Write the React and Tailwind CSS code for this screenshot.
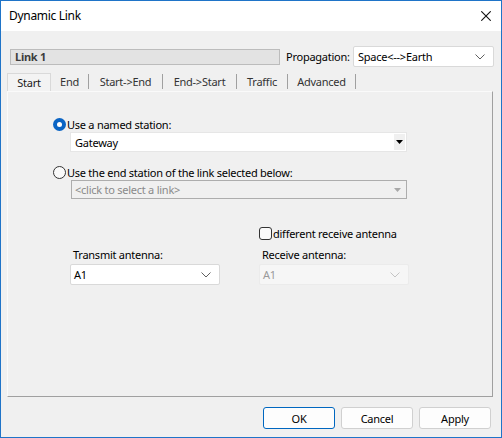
import React from 'react';

const Chevron = ({ color = '#606060' }) => (
    <svg width="10" height="6" viewBox="0 0 10 6" fill="none">
        <path d="M0.5 0.5 L5 5 L9.5 0.5" stroke={color} strokeWidth="1" />
    </svg>
);

const Triangle = ({ color = '#000' }) => (
    <svg width="7" height="4" viewBox="0 0 7 4">
        <path d="M0 0 H7 L3.5 4 Z" fill={color} />
    </svg>
);

// tab widths taken from the separators in the dialog
const tabs = [
    { label: 'End', w: 'w-[38px]' },
    { label: 'Start->End', w: 'w-[74px]' },
    { label: 'End->Start', w: 'w-[74px]' },
    { label: 'Traffic', w: 'w-[51px]' },
    { label: 'Advanced', w: 'w-[68px]' },
];

const App = () => {
    return (
        <div
            className="w-[502px] h-[438px] border border-[#1f74c8] bg-[#f0f0f0] flex flex-col text-[11px] tracking-[-0.25px] text-black leading-none"
            style={{ fontFamily: '"Noto Sans", "Open Sans", sans-serif' }}
        >
            {/* Title bar */}
            <div className="h-[30px] bg-white flex items-center justify-between pl-[8px] pr-[10px] shrink-0">
                <span className="text-[12px] tracking-[-0.3px] text-black">Dynamic Link</span>
                <svg width="10" height="10" viewBox="0 0 10 10">
                    <path d="M0.3 0.3 L9.7 9.7 M9.7 0.3 L0.3 9.7" stroke="#111" strokeWidth="1.1" />
                </svg>
            </div>

            {/* Header row */}
            <div className="flex items-center mt-[15px] pl-[9px] h-[21px] shrink-0">
                <div className="w-[270px] h-[16px] bg-[#e3e3e3] border border-[#bcbcbc] flex items-center pl-[4px] font-bold text-[#3c3c3c]">
                    Link 1
                </div>
                <span className="ml-[6px] w-[67px]">Propagation:</span>
                <div className="w-[141px] h-[21px] bg-white border border-[#d9d9d9] rounded-[2px] flex items-center justify-between pl-[4px] pr-[8px]">
                    <span>Space&lt;--&gt;Earth</span>
                    <Chevron />
                </div>
            </div>

            {/* Tabs */}
            <div className="flex items-end h-[18px] mt-[6px] pl-[6px] shrink-0">
                <div className="w-[44px] h-[18px] flex items-center justify-center bg-[#f3f3f3] border-t border-l border-r border-[#d9d9d9] text-[#1a1a1a]">
                    Start
                </div>
                {tabs.map((t) => (
                    <div
                        key={t.label}
                        className={`${t.w} h-[15px] mb-[2px] flex items-center justify-center border-r border-[#a0a0a0] text-[#333]`}
                    >
                        {t.label}
                    </div>
                ))}
            </div>

            {/* Tab panel */}
            <div className="ml-[6px] w-[486px] h-[306px] border-t border-l border-[#fafafa] border-r border-b border-r-[#a0a0a0] border-b-[#a0a0a0] shrink-0">
                <div className="pl-[45px] pt-[26px]">
                    {/* Named station */}
                    <div className="flex items-center h-[13px]">
                        <div className="w-[13px] h-[13px] rounded-full bg-[#0a64c4] flex items-center justify-center">
                            <div className="w-[5px] h-[5px] rounded-full bg-white" />
                        </div>
                        <span className="ml-[1px]">Use a named station:</span>
                    </div>
                    <div className="ml-[17px] mt-[1px] w-[337px] h-[20px] bg-white border border-[#e6e6e6] flex items-center justify-between pl-[4px] pr-[1px]">
                        <span>Gateway</span>
                        <div className="w-[11px] h-[16px] bg-[#f0f0f0] flex items-center justify-center">
                            <Triangle />
                        </div>
                    </div>

                    {/* End station */}
                    <div className="flex items-center h-[13px] mt-[14px]">
                        <div className="w-[13px] h-[13px] rounded-full border border-[#333] bg-[#fafafa]" />
                        <span className="ml-[1px]">Use the end station of the link selected below:</span>
                    </div>
                    <div className="ml-[18px] mt-[1px] w-[336px] h-[19px] bg-[#f0f0f0] border border-[#adadad] flex items-center justify-between pl-[3px] pr-[5px] text-[#8a8a8a]">
                        <span>&lt;click to select a link&gt;</span>
                        <Triangle color="#a8a8a8" />
                    </div>

                    {/* Antennas */}
                    <div className="flex mt-[28px] ml-[17px]">
                        <div className="w-[189px] flex flex-col">
                            <div className="h-[13px]" />
                            <span className="ml-[3px] mt-[8px] h-[12px] flex items-center">Transmit antenna:</span>
                            <div className="mt-[4px] w-[150px] h-[21px] bg-white border border-[#d9d9d9] rounded-[2px] flex items-center justify-between pl-[3px] pr-[8px]">
                                <span>A1</span>
                                <Chevron />
                            </div>
                        </div>
                        <div className="flex flex-col">
                            <div className="flex items-center h-[13px]">
                                <div className="w-[13px] h-[13px] rounded-[3px] border border-[#333] bg-[#fafafa]" />
                                <span className="ml-[1px]">different receive antenna</span>
                            </div>
                            <span className="ml-[3px] mt-[8px] h-[12px] flex items-center">Receive antenna:</span>
                            <div className="mt-[4px] w-[150px] h-[21px] bg-[#f6f6f6] border border-[#ebebeb] rounded-[2px] flex items-center justify-between pl-[3px] pr-[8px] text-[#9a9a9a]">
                                <span>A1</span>
                                <Chevron color="#c4c4c4" />
                            </div>
                        </div>
                    </div>
                </div>
            </div>

            {/* Buttons */}
            <div className="flex justify-end gap-[6px] pr-[10px] mt-[10px]">
                <button className="w-[72px] h-[22px] bg-[#fdfdfd] border border-[#0067c0] rounded-[3px] flex items-center justify-center">
                    OK
                </button>
                <button className="w-[72px] h-[22px] bg-[#fdfdfd] border border-[#d0d0d0] rounded-[3px] flex items-center justify-center">
                    Cancel
                </button>
                <button className="w-[72px] h-[22px] bg-[#fdfdfd] border border-[#d0d0d0] rounded-[3px] flex items-center justify-center">
                    Apply
                </button>
            </div>
        </div>
    );
};

export default App;
